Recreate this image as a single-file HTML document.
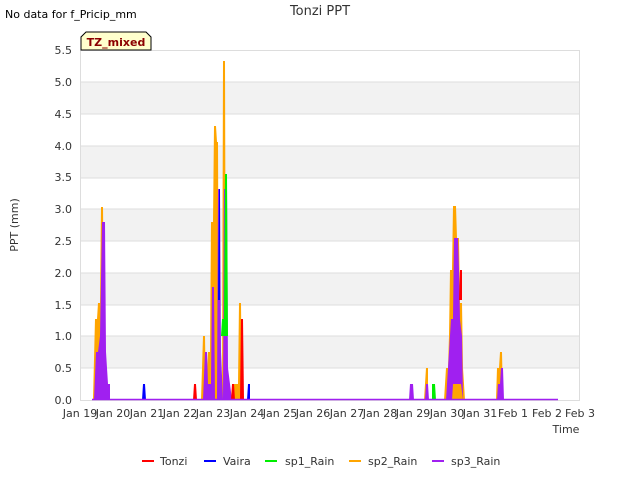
<!DOCTYPE html><html><head><style>body{margin:0;background:#fff;font-family:"DejaVu Sans","Liberation Sans",sans-serif;}</style></head><body>
<svg width="640" height="480" xmlns="http://www.w3.org/2000/svg" font-family="DejaVu Sans, Liberation Sans, sans-serif">
<rect width="640" height="480" fill="#fff"/>
<g fill="#f2f2f2"><rect x="80" y="82" width="500" height="32"/><rect x="80" y="146" width="500" height="32"/><rect x="80" y="209" width="500" height="32"/><rect x="80" y="273" width="500" height="32"/><rect x="80" y="336" width="500" height="32"/></g>
<g stroke="#ddd" stroke-width="1"><line x1="80" y1="50.5" x2="580" y2="50.5"/><line x1="80" y1="82" x2="580" y2="82"/><line x1="80" y1="114" x2="580" y2="114"/><line x1="80" y1="146" x2="580" y2="146"/><line x1="80" y1="178" x2="580" y2="178"/><line x1="80" y1="209" x2="580" y2="209"/><line x1="80" y1="241" x2="580" y2="241"/><line x1="80" y1="273" x2="580" y2="273"/><line x1="80" y1="305" x2="580" y2="305"/><line x1="80" y1="336" x2="580" y2="336"/><line x1="80" y1="368" x2="580" y2="368"/><line x1="80.5" y1="50" x2="80.5" y2="400"/><line x1="579.5" y1="50" x2="579.5" y2="400"/><line x1="80" y1="400.5" x2="580" y2="400.5"/></g>
<!-- small spikes -->
<g>
<polygon fill="#00f" points="142,400 143,384 145,384 146,400"/>
<polygon fill="#f00" points="193,400 194,384 196,384 197,400"/>
<polygon fill="#00f" points="247,400 248,384 250,384 250,400"/>
<polygon fill="orange" points="424,400 426,368 428,368 428,400"/>
<polygon fill="#0e0" points="432,400 432,384 435,384 436,400"/>
<polygon fill="#a020f0" points="409,400 410,384 413,384 414,400"/>
<polygon fill="#a020f0" points="425,400 426,384 428,384 429,400"/>
<polygon fill="orange" points="496,400 497,368 499,368 500,352 502,352 503,400"/>
<polygon fill="#a020f0" points="497,400 498,384 500,384 501,368 503,368 504,400"/>
</g>
<!-- cluster 1 -->
<polygon fill="orange" points="93,400 95,319 97,319 98,303 100,303 101,207 103,207 104,303 106,400"/>
<polygon fill="#0e0" points="97,384 98,352 100,352 100,368 99,384"/>
<polygon fill="#a020f0" points="94,400 96,352 98,352 100,336 102,222 105,222 106,352 108,384 110,384 110,400"/>
<!-- cluster 2 -->
<polygon fill="orange" points="201,400 203,336 205,336 206,400 208,352 210,352 211,222 213,222 214,126 216,126 217,142 218,142 219,400 222,400 223,61 225,61 226,400 232,400 233,384 238,384 239,303 241,303 242,400"/>
<polygon fill="#a020f0" points="203,400 205,352 207,352 208,384 211,384 212,287 214,287 215,400 217,400 218,189 220,189 221,352 223,400 224,189 227,189 228,368 230,384 232,400"/>
<polygon fill="#0e0" points="221,336 222,319 224,319 225,174 227,174 228,336"/>
<polygon fill="#00f" points="218,300 219,189 220,189 220,300"/>
<polygon fill="#f00" points="240,400 241,319 243,319 244,400"/>
<polygon fill="#f00" points="231,400 232,384 234,384 235,400"/>
<!-- cluster 3 -->
<polygon fill="orange" points="444,400 446,368 448,368 449,336 450,270 452,270 453,206 456,206 457,238 459,238 460,303 462,303 463,368 465,400"/>
<polygon fill="#a020f0" points="446,400 447,384 449,352 451,319 453,319 454,238 458,238 459,270 460,320 462,336 463,400 461,384 453,384 452,400"/>
<polygon fill="#f00" points="459,300 460,270 462,270 462,300"/>
<line x1="92" y1="399.5" x2="558" y2="399.5" stroke="#a020f0" stroke-width="1.5"/>
<!-- axes text -->
<g font-size="11" fill="#333" text-anchor="end"><text x="72" y="404">0.0</text><text x="72" y="372">0.5</text><text x="72" y="340">1.0</text><text x="72" y="309">1.5</text><text x="72" y="277">2.0</text><text x="72" y="245">2.5</text><text x="72" y="213">3.0</text><text x="72" y="181">3.5</text><text x="72" y="150">4.0</text><text x="72" y="118">4.5</text><text x="72" y="86">5.0</text><text x="72" y="54">5.5</text></g>
<g font-size="11" fill="#333" text-anchor="middle"><text x="80" y="417">Jan 19</text><text x="113" y="417">Jan 20</text><text x="147" y="417">Jan 21</text><text x="180" y="417">Jan 22</text><text x="213" y="417">Jan 23</text><text x="247" y="417">Jan 24</text><text x="280" y="417">Jan 25</text><text x="313" y="417">Jan 26</text><text x="347" y="417">Jan 27</text><text x="380" y="417">Jan 28</text><text x="413" y="417">Jan 29</text><text x="447" y="417">Jan 30</text><text x="480" y="417">Jan 31</text><text x="513" y="417">Feb 1</text><text x="547" y="417">Feb 2</text><text x="580" y="417">Feb 3</text></g>
<text x="566" y="433" font-size="11" fill="#333" text-anchor="middle">Time</text>
<text x="18" y="225" font-size="11" fill="#333" text-anchor="middle" transform="rotate(-90 18 225)">PPT (mm)</text>
<text x="320" y="15" font-size="13" fill="#333" text-anchor="middle">Tonzi PPT</text>
<text x="5" y="18" font-size="11" fill="#000">No data for f_Pricip_mm</text>
<path d="M81,50 L81,37 L86,32 L146,32 L151,37 L151,50 Z" fill="#ffffcc" stroke="#000"/>
<text x="116" y="46" font-size="11" font-weight="bold" fill="#8b0000" text-anchor="middle">TZ_mixed</text>
<!-- legend -->
<g font-size="11" fill="#333">
<line x1="142" y1="461" x2="154" y2="461" stroke="#f00" stroke-width="2"/><text x="160" y="465">Tonzi</text>
<line x1="204" y1="461" x2="216" y2="461" stroke="#00f" stroke-width="2"/><text x="223" y="465">Vaira</text>
<line x1="265" y1="461" x2="277" y2="461" stroke="#0e0" stroke-width="2"/><text x="285" y="465">sp1_Rain</text>
<line x1="349" y1="461" x2="361" y2="461" stroke="orange" stroke-width="2"/><text x="368" y="465">sp2_Rain</text>
<line x1="432" y1="461" x2="444" y2="461" stroke="#a020f0" stroke-width="2"/><text x="451" y="465">sp3_Rain</text>
</g>
</svg>
</body></html>
